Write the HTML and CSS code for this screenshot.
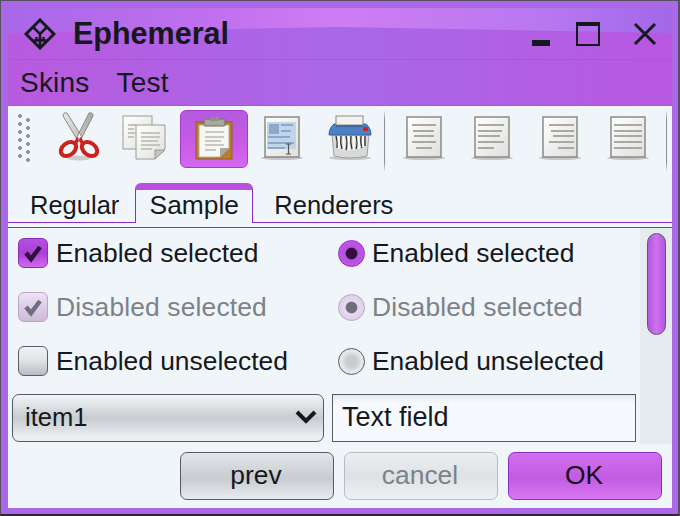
FILE: index.html
```html
<!DOCTYPE html>
<html lang="en">
<head>
    <meta charset="UTF-8">
    <title>Ephemeral</title>
    <link rel="stylesheet" href="styles.css">
</head>
<body>
<div class="window">
    <div class="titlebar">
        <svg class="logo" width="32" height="32" viewBox="0 0 32 32">
            <path d="M16 2 L30 16 L16 30 L2 16 Z" fill="none" stroke="#15181c" stroke-width="3"/>
            <path d="M9 9 L16 16 L23 9 M16 16 V29 M10 22.5 H22 M12.5 19 V22 M19.5 19 V22" fill="none" stroke="#15181c" stroke-width="2.6"/>
        </svg>
        <span class="title">Ephemeral</span>
        <div class="win-buttons">
            <span class="win-min"></span>
            <span class="win-max"></span>
            <svg class="win-close" width="24" height="24" viewBox="0 0 24 24">
                <path d="M2 2 L22 22 M22 2 L2 22" stroke="#15181c" stroke-width="3"/>
            </svg>
        </div>
    </div>
    <div class="menubar">
        <span>Skins</span>
        <span>Test</span>
    </div>

    <div class="content">
        <svg width="0" height="0" class="defs">
            <defs>
                <linearGradient id="paper" x1="0" y1="0" x2="1" y2="1">
                    <stop offset="0" stop-color="#ffffff"/>
                    <stop offset="1" stop-color="#dfdfdb"/>
                </linearGradient>
                <linearGradient id="blade" x1="0" y1="0" x2="1" y2="0">
                    <stop offset="0" stop-color="#e8e8e4"/>
                    <stop offset="1" stop-color="#a8a8a4"/>
                </linearGradient>
            </defs>
        </svg>
        <div class="toolbar">
            <div class="grip"></div>
            <div class="tool tool-cut">
                <svg width="44" height="52" viewBox="0 0 44 52">
                    <ellipse cx="22" cy="47" rx="12" ry="2.5" fill="#c9ccd0"/>
                    <path d="M6 5 Q6 1 10 2 L25 26 L21 30 Z M36 5 Q36 1 32 2 L19 28 L23 30 Z" fill="url(#blade)" stroke="#8a8a86" stroke-width="1"/>
                    <ellipse cx="11.5" cy="38" rx="8.5" ry="6" transform="rotate(-38 11.5 38)" fill="none" stroke="#cc221e" stroke-width="4"/>
                    <ellipse cx="32.5" cy="38" rx="8.5" ry="6" transform="rotate(38 32.5 38)" fill="none" stroke="#cc221e" stroke-width="4"/>
                    <path d="M16 33 L20 26 L23 28 L19 35 Z M28 33 L24 26 L21 28 L25 35 Z" fill="#cc221e"/>
                </svg>
            </div>
            <div class="tool tool-copy">
                <svg width="44" height="46" viewBox="0 0 44 46">
                    <rect x="1" y="1" width="29" height="33" fill="url(#paper)" stroke="#9a9a96"/>
                    <path d="M6 10 H14 M6 14 H12 M6 18 H13 M6 22 H12" stroke="#c4c4c0" stroke-width="2"/>
                    <path d="M14 10 H43 V34 L33 44 H14 Z" fill="url(#paper)" stroke="#9a9a96"/>
                    <path d="M33 44 V35 H43 Z" fill="#c4c4c0" stroke="#9a9a96"/>
                    <path d="M19 18 H38 M19 22 H38 M19 26 H36 M19 30 H38 M19 34 H30" stroke="#c4c4c0" stroke-width="2"/>
                </svg>
            </div>
            <div class="tool tool-paste">
                <svg width="38" height="44" viewBox="0 0 38 44">
                    <rect x="1" y="5" width="36" height="37" fill="#c07a26" stroke="#8e6020"/>
                    <path d="M4 8 H34 V31 L25 40 H4 Z" fill="#f6f6f2" stroke="#b0b0ac"/>
                    <path d="M25 40 V31 H34 Z" fill="#a8a8a4"/>
                    <rect x="9" y="2" width="21" height="7" rx="1" fill="#a8a89c" stroke="#6f6f66"/>
                    <rect x="15" y="0" width="9" height="4" fill="#8f8f84"/>
                    <path d="M10 15 H29 M10 20 H29 M10 24 H26 M10 28 H29 M10 33 H21" stroke="#c8c8c4" stroke-width="2"/>
                </svg>
            </div>
            <div class="tool tool-doc">
                <svg width="36" height="42" viewBox="0 0 36 42">
                    <ellipse cx="18" cy="42" rx="21" ry="2" fill="#c4c8cc"/>
                    <rect x="1" y="1" width="34" height="40" fill="url(#paper)" stroke="#8a8a86" stroke-width="1.5"/>
                    <rect x="3" y="6" width="29" height="27" fill="#c0d4ea"/>
                    <rect x="5" y="8" width="10" height="10" fill="#8ea8c8"/>
                    <path d="M17 9 H29 M17 15 H27 M4 21 H26 M4 27 H30 M4 32 H21" stroke="#8ea8c8" stroke-width="2"/>
                    <path d="M22 28 H27 M24.5 28 V38 M22 38 H27" stroke="#555" stroke-width="1.2" fill="none"/>
                </svg>
            </div>
            <div class="tool tool-shred">
                <svg width="44" height="46" viewBox="0 0 44 46">
                    <ellipse cx="21" cy="42" rx="21" ry="2" fill="#c4c8cc"/>
                    <path d="M3 19 H40 L38 40 Q21 44 5 40 Z" fill="#d8dad8" stroke="#a0a2a0"/>
                    <path d="M5 8 H37 Q42 12 42 19 H0 Q0 12 5 8 Z" fill="#4d7fc4" stroke="#3c64a0"/>
                    <rect x="7" y="8" width="27" height="2.5" fill="#2a4a80"/>
                    <rect x="7" y="0" width="27" height="9" fill="#f2f2ee" stroke="#8a8a86"/>
                    <rect x="34" y="11" width="5" height="4" rx="1" fill="#d62020"/>
                    <path d="M7 20 Q9 26 8 32 M12 20 Q11 27 13 33 M17 20 Q19 27 17 34 M22 20 Q21 26 23 33 M27 20 Q29 27 27 33 M32 20 Q31 26 33 32 M36 20 L36 30" stroke="#2c2c2c" stroke-width="1.3" fill="none"/>
                    <path d="M9.5 20 L10 33 M14.5 20 L15 34 M19.5 20 L20 34 M24.5 20 L25 34 M29.5 20 L30 33 M34 20 L34 31" stroke="#fafafa" stroke-width="2"/>
                </svg>
            </div>
            <div class="sep"></div>
            <div class="tool tool-page">
                <svg width="36" height="42" viewBox="0 0 36 42">
                    <ellipse cx="18" cy="42" rx="21" ry="2" fill="#c4c8cc"/>
                    <rect x="1" y="1" width="34" height="40" fill="url(#paper)" stroke="#8a8a86" stroke-width="1.5"/>
                    <path d="M6 9 H30 M7 15 H28 M8 20 H28 M6 26 H30 M10 32 H26" stroke="#a8a8a4" stroke-width="2"/>
                </svg>
            </div>
            <div class="tool tool-page">
                <svg width="36" height="42" viewBox="0 0 36 42">
                    <ellipse cx="18" cy="42" rx="21" ry="2" fill="#c4c8cc"/>
                    <rect x="1" y="1" width="34" height="40" fill="url(#paper)" stroke="#8a8a86" stroke-width="1.5"/>
                    <path d="M4 9 H30 M4 15 H28 M4 20 H26 M4 26 H30 M4 32 H20" stroke="#a8a8a4" stroke-width="2"/>
                </svg>
            </div>
            <div class="tool tool-page">
                <svg width="36" height="42" viewBox="0 0 36 42">
                    <ellipse cx="18" cy="42" rx="21" ry="2" fill="#c4c8cc"/>
                    <rect x="1" y="1" width="34" height="40" fill="url(#paper)" stroke="#8a8a86" stroke-width="1.5"/>
                    <path d="M7 9 H32 M9 15 H32 M11 20 H32 M7 26 H32 M16 32 H32" stroke="#a8a8a4" stroke-width="2"/>
                </svg>
            </div>
            <div class="tool tool-page">
                <svg width="36" height="42" viewBox="0 0 36 42">
                    <ellipse cx="18" cy="42" rx="21" ry="2" fill="#c4c8cc"/>
                    <rect x="1" y="1" width="34" height="40" fill="url(#paper)" stroke="#8a8a86" stroke-width="1.5"/>
                    <path d="M4 9 H32 M4 15 H32 M4 20 H32 M4 26 H32 M4 32 H32" stroke="#a8a8a4" stroke-width="2"/>
                </svg>
            </div>
            <div class="sep sep-last"></div>
        </div>

        <div class="tabs">
            <span class="tab">Regular</span>
            <span class="tab tab-active">Sample</span>
            <span class="tab">Renderers</span>
        </div>

        <div class="panel">
            <div class="panel-body">
                <div class="rows">
                    <div class="opt">
                        <span class="box box-on"><svg width="22" height="20" viewBox="0 0 22 20"><path d="M4 10 L9 16 L18 4" fill="none" stroke="#32103e" stroke-width="4.5"/></svg></span>
                        <span>Enabled selected</span>
                    </div>
                    <div class="opt opt-radio">
                        <span class="radio radio-on"></span>
                        <span>Enabled selected</span>
                    </div>
                    <div class="opt disabled">
                        <span class="box box-dis"><svg width="22" height="20" viewBox="0 0 22 20"><path d="M4 10 L9 16 L18 4" fill="none" stroke="#6e6e7c" stroke-width="4.5"/></svg></span>
                        <span>Disabled selected</span>
                    </div>
                    <div class="opt opt-radio disabled">
                        <span class="radio radio-dis"></span>
                        <span>Disabled selected</span>
                    </div>
                    <div class="opt">
                        <span class="box"></span>
                        <span>Enabled unselected</span>
                    </div>
                    <div class="opt opt-radio">
                        <span class="radio"></span>
                        <span>Enabled unselected</span>
                    </div>
                </div>
                <div class="fields">
                    <div class="combo">
                        <span>item1</span>
                        <svg width="22" height="14" viewBox="0 0 22 14"><path d="M2 2 L11 11 L20 2" fill="none" stroke="#15181c" stroke-width="4"/></svg>
                    </div>
                    <div class="textfield">Text field</div>
                </div>
            </div>
            <div class="scrollbar">
                <div class="thumb"></div>
            </div>
        </div>

        <div class="buttons">
            <span class="btn">prev</span>
            <span class="btn btn-off">cancel</span>
            <span class="btn btn-ok">OK</span>
        </div>
    </div>
</div>
</body>
</html>
```

FILE: styles.css
```css
html, body {
    margin: 0;
    padding: 0;
}
body {
    width: 680px;
    height: 516px;
    overflow: hidden;
    font-family: "Liberation Sans", Arial, sans-serif;
    font-size: 26.4px;
    color: #15181c;
}
.window {
    width: 680px;
    height: 516px;
    box-sizing: border-box;
    display: flex;
    flex-direction: column;
    padding: 7px 6px 6px 7px;
    border: 1px solid #55505c;
    border-bottom: 2px solid #2c2a30;
    border-right: 2px solid #55505c;
    background: #aa68e8;
}
.titlebar {
    position: relative;
    isolation: isolate;
    height: 52px;
    box-sizing: border-box;
    display: flex;
    align-items: center;
    padding: 0 0 0 16px;
    border-bottom: 1px solid #b850d4;
    background: linear-gradient(90deg, #b85adf 0, #a868e8 50%, #b858e0 100%);
}
/* glossy band across the top of the title */
.titlebar::before {
    content: "";
    position: absolute;
    top: 0;
    left: 0;
    right: 0;
    height: 25px;
    z-index: -1;
    clip-path: polygon(0 0, 100% 0, 100% 100%, 50% 19px, 0 100%);
    background: linear-gradient(92deg, #a868e8 0, #c070ee 30%, #cf7df2 50%, #b878f0 80%, #a268ea 100%);
}
.logo {
    margin-top: 1px;
}
.title {
    margin-left: 17px;
    font-size: 30.5px;
    font-weight: bold;
}
.win-buttons {
    margin-left: auto;
    display: flex;
    align-items: flex-end;
    height: 24px;
    margin-top: 1px;
    padding-right: 15px;
}
.win-min {
    width: 18px;
    height: 6px;
    background: #15181c;
}
.win-max {
    width: 24px;
    height: 24px;
    box-sizing: border-box;
    margin-left: 26px;
    border: 2px solid #15181c;
    border-top-width: 4px;
}
.win-close {
    margin-left: 33px;
}
.menubar {
    height: 46px;
    box-sizing: border-box;
    display: flex;
    gap: 27px;
    align-items: center;
    padding: 0 0 0 12px;
    font-size: 28px;
    letter-spacing: 0.2px;
    border-bottom: 1px solid #b850d4;
    background: linear-gradient(90deg, #b85adf 0, #a868e8 50%, #b858e0 100%);
}
.content {
    flex: 1;
    display: flex;
    flex-direction: column;
    background: #f0f5fa;
}
.defs {
    position: absolute;
}
.toolbar {
    height: 66px;
    display: flex;
    align-items: flex-start;
}
.toolbar svg {
    overflow: visible;
}
.grip {
    width: 12px;
    height: 48px;
    margin: 8px 0 0 10px;
    background:
        radial-gradient(circle at 2px 2px, #8c9094 1.5px, transparent 2.2px) 0 0 / 12px 8px,
        radial-gradient(circle at 10px 6px, #8c9094 1.5px, transparent 2.2px) 0 0 / 12px 8px;
}
.tool {
    display: flex;
    justify-content: center;
    align-items: center;
}
.tool-cut {
    width: 44px;
    margin: 5px 0 0 27px;
}
.tool-copy {
    width: 44px;
    margin: 9px 0 0 21px;
}
.tool-paste {
    width: 68px;
    height: 58px;
    box-sizing: border-box;
    margin: 4px 0 0 14px;
    border: 1px solid #a23cc8;
    border-radius: 6px;
    background: linear-gradient(#b45ae0, #c85ae6 55%, #d468f0);
}
.tool-doc {
    margin: 10px 0 0 16px;
}
.tool-shred {
    margin: 10px 0 0 29px;
    width: 44px;
}
.sep {
    width: 1px;
    height: 62px;
    margin: 4px 0 0 11px;
    background: linear-gradient(transparent, #8c9094 15%, #8c9094 85%, transparent);
}
.tool-page {
    margin: 10px 0 0 32px;
}
.sep + .tool-page {
    margin-left: 21px;
}
.sep-last {
    margin-left: 20px;
}
.tabs {
    height: 51px;
    box-sizing: border-box;
    display: flex;
    align-items: flex-end;
    border-bottom: 1px solid #8c2cc0;
    font-size: 25.5px;
}
.tab {
    height: 39px;
    box-sizing: border-box;
    display: flex;
    align-items: center;
    padding: 6px 0 0 22px;
}
.tab-active {
    width: 118px;
    height: 40px;
    margin: 0 0 -1px 16px;
    padding: 0 0 2px 0;
    font-size: 26.4px;
    justify-content: center;
    border: 1px solid #8c2cc0;
    border-bottom: 0;
    border-top: 7px solid #b850e0;
    border-radius: 6px 6px 0 0;
    background: #f0f5fa;
}
.tab:last-child {
    padding-left: 21px;
}
.panel {
    height: 216px;
    display: flex;
    border-top: 1px solid #8c2cc0;
    margin-top: 4px;
}
.panel-body {
    flex: 1;
    padding: 9px 4px 0 4px;
}
.rows {
    display: grid;
    grid-template-columns: 320px 1fr;
    grid-auto-rows: 54px;
    margin-left: 6px;
    height: 157px;
}
.opt {
    display: flex;
    align-items: center;
    gap: 8px;
    height: 32px;
    white-space: nowrap;
}
.opt-radio {
    gap: 7px;
}
.disabled {
    color: #7c8288;
    letter-spacing: 0.15px;
}
.box {
    width: 30px;
    height: 30px;
    box-sizing: border-box;
    display: flex;
    align-items: center;
    justify-content: center;
    border: 1px solid #5a5e64;
    border-radius: 6px;
    background: linear-gradient(#f0f2f4, #e2e5e8 45%, #b8bcc2);
}
.box-on {
    border-color: #8c2cc0;
    background: linear-gradient(#b650e0, #a840d4 50%, #d468f0);
}
.box-dis {
    border-color: #b8a8c8;
    background: linear-gradient(#f0e2f8, #dccce8 50%, #cdbcd8);
}
.radio {
    width: 27px;
    height: 27px;
    box-sizing: border-box;
    border: 1px solid #5a5e64;
    border-radius: 50%;
    background: radial-gradient(circle, #c8ccd0 0, #c8ccd0 30%, #e8eaec 60%, #c0c4c8 100%);
}
.radio-on {
    border-color: #8c2cc0;
    background: radial-gradient(circle, #32103e 0, #32103e 30%, #b64ee0 36%, #c860e8 100%);
}
.radio-dis {
    border-color: #b8a8c8;
    background: radial-gradient(circle, #6e6e7c 0, #6e6e7c 30%, #e8daf0 36%, #d8c8e4 100%);
}
.fields {
    display: flex;
    gap: 8px;
}
.combo {
    width: 312px;
    height: 48px;
    box-sizing: border-box;
    display: flex;
    align-items: center;
    justify-content: space-between;
    padding: 0 6px 2px 12px;
    font-size: 25.5px;
    border: 1px solid #555a60;
    border-radius: 7px;
    background: linear-gradient(#f2f4f6, #e6e9ec 15%, #c8cbcf 50%, #eceff2 92%);
}
.textfield {
    width: 304px;
    height: 48px;
    box-sizing: border-box;
    display: flex;
    align-items: center;
    padding: 0 0 2px 9px;
    font-size: 27px;
    border: 1px solid #555a60;
    background: linear-gradient(#e4e8ec, #f6fafe 18%);
}
.scrollbar {
    width: 32px;
    height: 216px;
    background: #e6ebef;
    box-sizing: border-box;
    padding: 5px 0 0 7px;
}
.thumb {
    width: 19px;
    height: 102px;
    box-sizing: border-box;
    border: 1px solid #5a5e64;
    border-radius: 10px;
    background: linear-gradient(90deg, #b058e0, #d070f0 50%, #b058e0);
}
.buttons {
    display: flex;
    justify-content: flex-end;
    gap: 10px;
    padding: 8px 10px 0 0;
}
.btn {
    width: 154px;
    height: 48px;
    box-sizing: border-box;
    display: flex;
    align-items: center;
    justify-content: center;
    padding: 0 2px 2px 0;
    border: 1px solid #555a60;
    border-radius: 7px;
    background: linear-gradient(#e4e7ea, #dde0e4 12%, #c8cbcf 55%, #e8ebee 100%);
}
.btn-off {
    color: #7c8288;
    border-color: #b8bcc0;
    background: linear-gradient(#eceef0, #dfe2e5 50%, #eef1f4 100%);
}
.btn-ok {
    color: #15081c;
    border-color: #8c2cc0;
    background: linear-gradient(#d070ee, #c25ce2 55%, #d878f2);
}
```
